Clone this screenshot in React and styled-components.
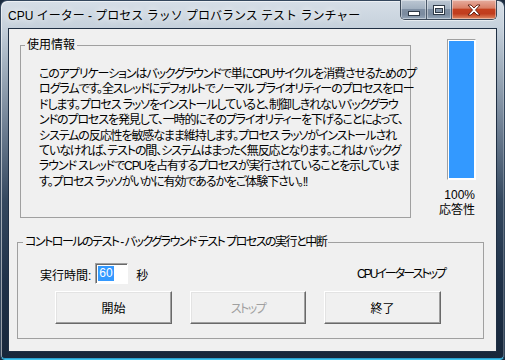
import React from 'react';
import styled, { createGlobalStyle } from 'styled-components';

const UI = `"Liberation Sans", "Noto Sans CJK JP", sans-serif`;

const GlobalStyle = createGlobalStyle`
  html, body { margin: 0; padding: 0; }
  body {
    width: 505px; height: 360px; overflow: hidden;
    background: #1a2a3e;
    font-family: ${UI};
    font-feature-settings: "palt" 1;
    color: #000;
  }
`;

const Window = styled.div`
  box-sizing: border-box;
  width: 505px;
  height: 360px;
  display: flex;
  flex-direction: column;
  padding: 0 7px 7px;
  border: 1px solid #34475d;
  border-bottom-color: #3fc6ee;
  border-radius: 7px 7px 5px 5px;
  background: linear-gradient(
    to bottom,
    #d6dee7 0px,
    #c6d1dc 26px,
    #a6b4c2 60px,
    #6b7c90 130px,
    #34485f 200px,
    #203249 280px,
    #17273b 100%
  );
  box-shadow: inset 1px 1px 0 rgba(255, 255, 255, 0.55),
    inset -1px 0 0 rgba(255, 255, 255, 0.25), inset 0 -1px 0 #2b9fd0;
`;

const TitleBar = styled.div`
  height: 27px;
  display: flex;
  justify-content: space-between;
  align-items: flex-start;
`;

const Title = styled.div`
  height: 27px;
  display: flex;
  align-items: center;
  font-size: 12px;
  font-feature-settings: normal;
  white-space: nowrap;
  text-shadow: 0 0 6px rgba(255, 255, 255, 0.95), 0 0 10px rgba(255, 255, 255, 0.8);
`;

const Controls = styled.div`
  display: flex;
  height: 19px;
  margin-top: -1px;
  border: 1px solid #3b4858;
  border-top: none;
  border-radius: 0 0 5px 5px;
  overflow: hidden;
  box-shadow: 0 1px 0 rgba(255, 255, 255, 0.55);
`;

const CtrlBtn = styled.div`
  width: ${(p) => p.$w}px;
  display: flex;
  align-items: center;
  justify-content: center;
  & + & { border-left: 1px solid #4a5869; }
  background: ${(p) =>
    p.$close
      ? 'linear-gradient(#e6ad9f 0%, #d98068 42%, #c4401f 50%, #c03d1e 72%, #e08a64 100%)'
      : 'linear-gradient(#bcc7d3 0%, #a3b1c1 45%, #7f8fa3 50%, #7a8a9e 75%, #95a6b9 100%)'};
  box-shadow: inset 0 0 0 1px rgba(255, 255, 255, 0.4);
`;

const Client = styled.div`
  flex: 1;
  display: flex;
  flex-direction: column;
  background: #f0f0f0;
  border: 1px solid #1f2f43;
  padding-top: 9px;
`;

const TopRow = styled.div`
  display: flex;
  align-items: flex-start;
  padding-left: 11px;
`;

const Group = styled.fieldset`
  box-sizing: border-box;
  margin: ${(p) => p.$m};
  padding: 0;
  width: ${(p) => p.$w}px;
  height: ${(p) => p.$h}px;
  border: 1px solid #a0a0a0;
  min-width: 0;
`;

const Legend = styled.legend`
  margin-left: ${(p) => p.$x}px;
  padding: 0 2px;
  font-size: 12px;
  line-height: 14px;
  letter-spacing: ${(p) => p.$ls || 0}px;
  white-space: nowrap;
`;

const Body = styled.div`
  margin-top: 15px;
  padding-left: 18px;
  font-size: 12px;
  line-height: 15.4px;
  letter-spacing: -1.1px;
`;

const Line = styled.div`
  white-space: nowrap;
`;

const Side = styled.div`
  margin-left: 26px;
  width: 40px;
  display: flex;
  flex-direction: column;
  align-items: flex-end;
`;

const Meter = styled.div`
  box-sizing: border-box;
  width: 29px;
  height: 141px;
  margin: 1px 1px 0 0;
  border: 1px solid;
  border-color: #a0a0a0 #fff #fff #a0a0a0;
  padding: 1px;
  background: #fff;
  display: flex;
  flex-direction: column;
  justify-content: flex-end;
`;

const MeterFill = styled.div`
  background: #3399ff;
`;

const SideLabel = styled.div`
  font-size: 12px;
  line-height: 15px;
  margin-top: ${(p) => p.$mt || 0}px;
  margin-right: 2px;
  white-space: nowrap;
`;

const ControlRow = styled.div`
  display: flex;
  align-items: center;
  margin-top: 14px;
  padding: 0 38px 0 22px;
  height: 21px;
`;

const Label = styled.span`
  font-size: 12px;
  line-height: 14px;
  padding-top: 5px;
  margin-left: ${(p) => p.$ml || 0}px;
  white-space: nowrap;
`;

const Status = styled.span`
  margin-left: auto;
  font-size: 12px;
  line-height: 14px;
  padding-top: 1px;
  letter-spacing: -2px;
  white-space: nowrap;
`;

const Field = styled.div`
  box-sizing: border-box;
  width: 33px;
  height: 21px;
  margin-left: 4px;
  border: 1px solid;
  border-color: #a0a0a0 #fff #fff #a0a0a0;
  box-shadow: inset 1px 1px 0 #696969;
  background: #fff;
  display: flex;
  align-items: center;
  padding-left: 2px;
`;

const Selected = styled.span`
  background: #3399ff;
  color: #fff;
  font-size: 12px;
  line-height: 15px;
  padding: 0 1px;
`;

const ButtonRow = styled.div`
  display: grid;
  grid-template-columns: 117px 116px 117px;
  column-gap: 18px;
  margin-top: 7px;
  padding-left: 37px;
`;

const Button = styled.div`
  box-sizing: border-box;
  height: 33px;
  display: flex;
  align-items: center;
  justify-content: center;
  font-size: 12px;
  letter-spacing: ${(p) => (p.$disabled ? -1.5 : 0)}px;
  color: ${(p) => (p.$disabled ? '#a0a0a0' : '#000')};
  background: #f0f0f0;
  border: 1px solid;
  border-color: #fff #696969 #696969 #fff;
  box-shadow: inset -1px -1px 0 #a0a0a0, inset 1px 1px 0 #e3e3e3;
`;

const lines = [
  'このアプリケーションはバックグラウンドで単にCPUサイクルを消費させるためのプ',
  'ログラムです。全スレッドにデフォルトでノーマル プライオリティーのプロセスをロー',
  'ドします。プロセス ラッソをインストールしていると、制御しきれないバックグラウ',
  'ンドのプロセスを発見して、一時的にそのプライオリティーを下げることによって、',
  'システムの反応性を敏感なまま維持します。プロセス ラッソがインストールされ',
  'ていなければ、テストの間、システムはまったく無反応となります。これはバックグ',
  'ラウンド スレッドでCPUを占有するプロセスが実行されていることを示していま',
  'す。プロセス ラッソがいかに有効であるかをご体験下さい。!!',
];

const MinIcon = () => (
  <svg width="12" height="6" viewBox="0 0 12 6" style={{ marginTop: 8 }}>
    <rect x="0.5" y="0.5" width="11" height="4" fill="#fff" stroke="#2e3946" />
  </svg>
);

const MaxIcon = () => (
  <svg width="12" height="10" viewBox="0 0 12 10">
    <rect x="0.5" y="0.5" width="11" height="9" fill="#fff" stroke="#2e3946" />
    <rect x="2.5" y="3.5" width="7" height="4" fill="#8797aa" stroke="#2e3946" />
  </svg>
);

const CloseIcon = () => (
  <svg width="14" height="12" viewBox="0 0 14 12">
    <path
      d="M1 1 L4 1 L7 4 L10 1 L13 1 L8.5 6 L13 11 L10 11 L7 8 L4 11 L1 11 L5.5 6 Z"
      fill="#fff"
      stroke="#5a1a0c"
      strokeWidth="0.9"
      strokeLinejoin="round"
    />
  </svg>
);

export default function App() {
  const responsiveness = 100;
  return (
    <>
      <GlobalStyle />
      <Window>
        <TitleBar>
          <Title>CPU イーター - プロセス ラッソ プロバランス テスト ランチャー</Title>
          <Controls>
            <CtrlBtn $w={25}>
              <MinIcon />
            </CtrlBtn>
            <CtrlBtn $w={24}>
              <MaxIcon />
            </CtrlBtn>
            <CtrlBtn $w={44} $close>
              <CloseIcon />
            </CtrlBtn>
          </Controls>
        </TitleBar>
        <Client>
          <TopRow>
            <Group $w={391} $h={180} $m="0">
              <Legend $x={4}>使用情報</Legend>
              <Body>
                {lines.map((l, i) => (
                  <Line key={i}>{l}</Line>
                ))}
              </Body>
            </Group>
            <Side>
              <Meter>
                <MeterFill style={{ height: `${responsiveness}%` }} />
              </Meter>
              <SideLabel $mt={8}>{responsiveness}%</SideLabel>
              <SideLabel>応答性</SideLabel>
            </Side>
          </TopRow>
          <Group $w={467} $h={104} $m="17px 0 0 8px">
            <Legend $x={5} $ls={-1.5}>
              コントロールのテスト - バックグラウンド テスト プロセスの実行と中断
            </Legend>
            <ControlRow>
              <Label>実行時間:</Label>
              <Field>
                <Selected>60</Selected>
              </Field>
              <Label $ml={8}>秒</Label>
              <Status>CPUイーターストップ</Status>
            </ControlRow>
            <ButtonRow>
              <Button>開始</Button>
              <Button $disabled>ストップ</Button>
              <Button>終了</Button>
            </ButtonRow>
          </Group>
        </Client>
      </Window>
    </>
  );
}
